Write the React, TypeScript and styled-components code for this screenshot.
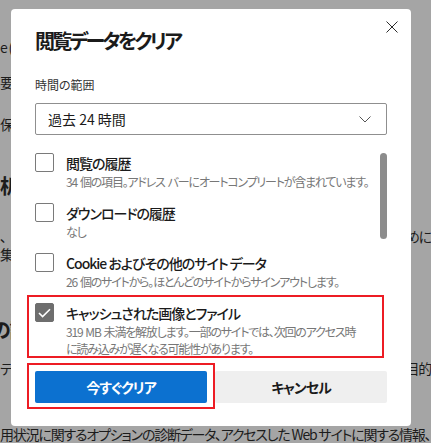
import styled, { createGlobalStyle } from 'styled-components'

const GlobalStyle = createGlobalStyle`
  html, body {
    margin: 0;
    padding: 0;
  }
  body {
    font-family: "Noto Sans CJK JP", "Noto Sans", sans-serif;
  }
`

const Screen = styled.div`
  position: relative;
  width: 431px;
  height: 443px;
  overflow: hidden;
  background: #a5a5a5;
  font-feature-settings: "palt";
`

/* dimmed page behind the modal */
const BgPage = styled.div`
  display: flex;
  flex-direction: column;
  color: #1c1c1c;
`

const BgLine = styled.div<{ $mt: number; $size?: number; $lh?: number; $bold?: boolean; $shift?: number }>`
  display: flex;
  justify-content: space-between;
  margin-top: ${p => p.$mt}px;
  margin-left: ${p => p.$shift ?? 0}px;
  height: ${p => p.$lh ?? 20}px;
  font-size: ${p => p.$size ?? 14}px;
  line-height: ${p => p.$lh ?? 20}px;
  font-weight: ${p => (p.$bold ? 700 : 400)};
  letter-spacing: -1.2px;
  white-space: nowrap;
`

const Dialog = styled.div`
  position: absolute;
  top: 9px;
  left: 11px;
  width: 400px;
  box-sizing: border-box;
  padding: 18px 24px 23px 24px;
  background: #fff;
  border-radius: 4px;
  color: #1b1b1b;
`

const CloseButton = styled.button`
  position: absolute;
  top: 12px;
  right: 13px;
  width: 12px;
  height: 12px;
  padding: 0;
  border: none;
  background: none;
  display: flex;
`

const Title = styled.h1`
  margin: 0;
  font-size: 20px;
  line-height: 28px;
  font-weight: 600;
  letter-spacing: -2.7px;
`

const FieldLabel = styled.div`
  margin-top: 22px;
  font-size: 12px;
  line-height: 16px;
  color: #333;
`

const Select = styled.div`
  margin-top: 10px;
  height: 32px;
  box-sizing: border-box;
  border: 1px solid #8f8f8f;
  border-radius: 2px;
  padding: 0 15px 0 12px;
  display: flex;
  align-items: center;
  justify-content: space-between;
  font-size: 14px;
`

const ListArea = styled.div`
  margin-top: 18px;
  display: flex;
  gap: 4px;
`

const Items = styled.div`
  flex: 1;
  display: flex;
  flex-direction: column;
  gap: 13px;
`

const Item = styled.div`
  position: relative;
  display: flex;
  gap: 12px;
`

const Check = styled.div<{ $checked?: boolean }>`
  flex: none;
  width: 19px;
  height: 19px;
  box-sizing: border-box;
  border-radius: 2px;
  border: 1px solid ${p => (p.$checked ? '#6e6e6e' : '#7a7a7a')};
  background: ${p => (p.$checked ? '#6e6e6e' : '#fff')};
  display: flex;
  align-items: center;
  justify-content: center;
`

const ItemText = styled.div`
  display: flex;
  flex-direction: column;
`

const ItemLabel = styled.div`
  font-size: 14px;
  line-height: 20px;
  font-weight: 500;
  letter-spacing: -1px;
  color: #1b1b1b;
`

const ItemDesc = styled.div`
  font-size: 12px;
  line-height: 17px;
  letter-spacing: -1.2px;
  word-spacing: 1.5px;
  color: #777;
`

const ScrollTrack = styled.div`
  width: 7px;
`

const ScrollThumb = styled.div`
  height: 86px;
  border-radius: 4px;
  background: #8c8c8c;
`

/* red annotation frames drawn over the screenshot */
const Highlight = styled.div<{ $bottom: number }>`
  position: absolute;
  top: -8px;
  left: -8px;
  right: -8px;
  bottom: ${p => p.$bottom}px;
  border: 2px solid #ed1c24;
  pointer-events: none;
`

const ButtonRow = styled.div`
  margin-top: 14px;
  display: grid;
  grid-template-columns: 1fr 1fr;
  gap: 8px;
`

const ButtonWrap = styled.div`
  position: relative;
  display: flex;
`

const Button = styled.button<{ $primary?: boolean }>`
  flex: 1;
  height: 32px;
  border: none;
  border-radius: 2px;
  font-family: inherit;
  font-feature-settings: "palt";
  font-size: 14px;
  font-weight: 700;
  letter-spacing: -1px;
  background: ${p => (p.$primary ? '#0c71d0' : '#efefef')};
  color: ${p => (p.$primary ? '#fff' : '#1b1b1b')};
`

const items = [
  { label: '閲覧の履歴', desc: ['34 個の項目。アドレス バーにオートコンプリートが含まれています。'] },
  { label: 'ダウンロードの履歴', desc: ['なし'] },
  { label: 'Cookie およびその他のサイト データ', desc: ['26 個のサイトから。ほとんどのサイトからサインアウトします。'] },
  {
    label: 'キャッシュされた画像とファイル',
    desc: ['319 MB 未満を解放します。一部のサイトでは、次回のアクセス時', 'に読み込みが遅くなる可能性があります。'],
    checked: true,
  },
]

const App = () => {
  return (
    <Screen>
      <GlobalStyle />
      <BgPage>
        <BgLine $mt={37}><span>e (Chromium) で閲覧データを削除する</span></BgLine>
        <BgLine $mt={15}><span>要なデータのみを保存します</span></BgLine>
        <BgLine $mt={22}><span>保存されたデータ</span></BgLine>
        <BgLine $mt={38} $size={20} $lh={28} $bold><span>析データ</span></BgLine>
        <BgLine $mt={28} $lh={17}><span>、</span><span>めに</span></BgLine>
        <BgLine $mt={0} $lh={18}><span>集されます</span></BgLine>
        <BgLine $mt={53} $size={20} $lh={28} $bold $shift={-9}><span>の訂正</span></BgLine>
        <BgLine $mt={14}><span>テレメトリ</span><span>目的</span></BgLine>
        <BgLine $mt={46}><span>用状況に関するオプションの診断データ、アクセスした Web サイトに関する情報、</span></BgLine>
      </BgPage>

      <Dialog>
        <CloseButton aria-label="閉じる">
          <svg width="12" height="12" viewBox="0 0 12 12">
            <path d="M0.5 0.5 L11.5 11.5 M11.5 0.5 L0.5 11.5" stroke="#2b2b2b" strokeWidth="1" fill="none" />
          </svg>
        </CloseButton>
        <Title>閲覧データをクリア</Title>
        <FieldLabel>時間の範囲</FieldLabel>
        <Select>
          <span>過去 24 時間</span>
          <svg width="12" height="7" viewBox="0 0 12 7">
            <path d="M0.5 0.5 L6 6 L11.5 0.5" stroke="#555" strokeWidth="1" fill="none" />
          </svg>
        </Select>

        <ListArea>
          <Items>
            {items.map(it => (
              <Item key={it.label}>
                <Check $checked={it.checked}>
                  {it.checked && (
                    <svg width="13" height="10" viewBox="0 0 13 10">
                      <path d="M1 5 L4.6 8.6 L12 1.2" stroke="#fff" strokeWidth="1.6" fill="none" />
                    </svg>
                  )}
                </Check>
                <ItemText>
                  <ItemLabel>{it.label}</ItemLabel>
                  {it.desc.map(line => <ItemDesc key={line}>{line}</ItemDesc>)}
                </ItemText>
                {it.checked && <Highlight $bottom={-1} />}
              </Item>
            ))}
          </Items>
          <ScrollTrack>
            <ScrollThumb />
          </ScrollTrack>
        </ListArea>

        <ButtonRow>
          <ButtonWrap>
            <Button $primary>今すぐクリア</Button>
            <Highlight $bottom={-6} />
          </ButtonWrap>
          <ButtonWrap>
            <Button>キャンセル</Button>
          </ButtonWrap>
        </ButtonRow>
      </Dialog>
    </Screen>
  )
}

export default App
